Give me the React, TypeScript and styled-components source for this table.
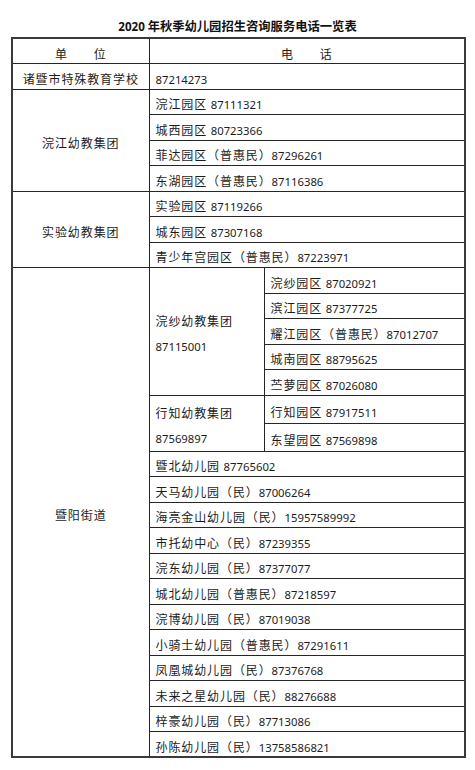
import styled, { createGlobalStyle } from 'styled-components';

const GlobalStyle = createGlobalStyle`
  body {
    margin: 0;
    background: #ffffff;
    color: #1c1c1c;
    font-family: "Noto Sans CJK SC", "Noto Sans", sans-serif;
  }
`;

const Page = styled.div`
  width: 475px;
  padding-top: 16px;
`;

const Title = styled.h1`
  margin: 0;
  width: 475px;
  text-align: center;
  font-size: 12.3px;
  line-height: 20px;
  font-weight: 700;
  color: #111;
`;

const TitleNum = styled.span`
  font-family: "Noto Sans", sans-serif;
  font-size: 11.6px;
  font-weight: 700;
`;

const Table = styled.table`
  margin-left: 11px;
  width: 453px;
  table-layout: fixed;
  border-collapse: collapse;
  border: 2px solid #3a3a3a;
`;

const Row = styled.tr`
  height: 25.5px;
`;

const Cell = styled.td<{ $center?: boolean }>`
  border: 1px solid #262626;
  padding: 6px 6px 0;
  font-size: 12px;
  line-height: 16px;
  letter-spacing: 0.9px;
  text-align: ${(p) => (p.$center ? 'center' : 'left')};
  vertical-align: middle;
  white-space: nowrap;
  overflow: hidden;
`;

const Group = styled(Cell)`
  line-height: 25px;
  padding-top: 4px;
`;

const Num = styled.span`
  font-family: "Noto Sans", sans-serif;
  font-size: 11.3px;
  letter-spacing: 0;
`;

function Entry({ text }: { text: string }) {
  const m = text.match(/^(.*?)(\s?)(\d+)$/);
  if (!m) return <>{text}</>;
  return (
    <>
      {m[1]}
      {m[2]}
      <Num>{m[3]}</Num>
    </>
  );
}

const huanjiang = ['浣江园区 87111321', '城西园区 80723366', '菲达园区（普惠民）87296261', '东湖园区（普惠民）87116386'];
const shiyan = ['实验园区 87119266', '城东园区 87307168', '青少年宫园区（普惠民）87223971'];
const huansha = ['浣纱园区 87020921', '滨江园区 87377725', '耀江园区（普惠民）87012707', '城南园区 88795625', '苎萝园区 87026080'];
const xingzhi = ['行知园区 87917511', '东望园区 87569898'];
const others = [
  '暨北幼儿园 87765602',
  '天马幼儿园（民）87006264',
  '海亮金山幼儿园（民）15957589992',
  '市托幼中心（民）87239355',
  '浣东幼儿园（民）87377077',
  '城北幼儿园（普惠民）87218597',
  '浣博幼儿园（民）87019038',
  '小骑士幼儿园（普惠民）87291611',
  '凤凰城幼儿园（民）87376768',
  '未来之星幼儿园（民）88276688',
  '梓豪幼儿园（民）87713086',
  '孙陈幼儿园（民）13758586821',
];

function GroupRows({ unit, items }: { unit: string; items: string[] }) {
  return (
    <>
      {items.map((t, i) => (
        <Row key={t}>
          {i === 0 && (
            <Cell $center rowSpan={items.length}>
              {unit}
            </Cell>
          )}
          <Cell colSpan={2}>
            <Entry text={t} />
          </Cell>
        </Row>
      ))}
    </>
  );
}

export default function App() {
  const jiyangSpan = huansha.length + xingzhi.length + others.length;
  return (
    <Page>
      <GlobalStyle />
      <Title>
        <TitleNum>2020</TitleNum> 年秋季幼儿园招生咨询服务电话一览表
      </Title>
      <Table>
        <colgroup>
          <col style={{ width: 137 }} />
          <col style={{ width: 115 }} />
          <col style={{ width: 201 }} />
        </colgroup>
        <tbody>
          <Row>
            <Cell $center>单　　位</Cell>
            <Cell $center colSpan={2}>电　　话</Cell>
          </Row>
          <Row>
            <Cell $center>诸暨市特殊教育学校</Cell>
            <Cell colSpan={2}>
              <Entry text="87214273" />
            </Cell>
          </Row>
          <GroupRows unit="浣江幼教集团" items={huanjiang} />
          <GroupRows unit="实验幼教集团" items={shiyan} />
          {huansha.map((t, i) => (
            <Row key={t}>
              {i === 0 && (
                <Cell $center rowSpan={jiyangSpan}>
                  暨阳街道
                </Cell>
              )}
              {i === 0 && (
                <Group rowSpan={huansha.length}>
                  浣纱幼教集团
                  <br />
                  <Num>87115001</Num>
                </Group>
              )}
              <Cell>
                <Entry text={t} />
              </Cell>
            </Row>
          ))}
          {xingzhi.map((t, i) => (
            <Row key={t}>
              {i === 0 && (
                <Group rowSpan={xingzhi.length}>
                  行知幼教集团
                  <br />
                  <Num>87569897</Num>
                </Group>
              )}
              <Cell>
                <Entry text={t} />
              </Cell>
            </Row>
          ))}
          {others.map((t) => (
            <Row key={t}>
              <Cell colSpan={2}>
                <Entry text={t} />
              </Cell>
            </Row>
          ))}
        </tbody>
      </Table>
    </Page>
  );
}
